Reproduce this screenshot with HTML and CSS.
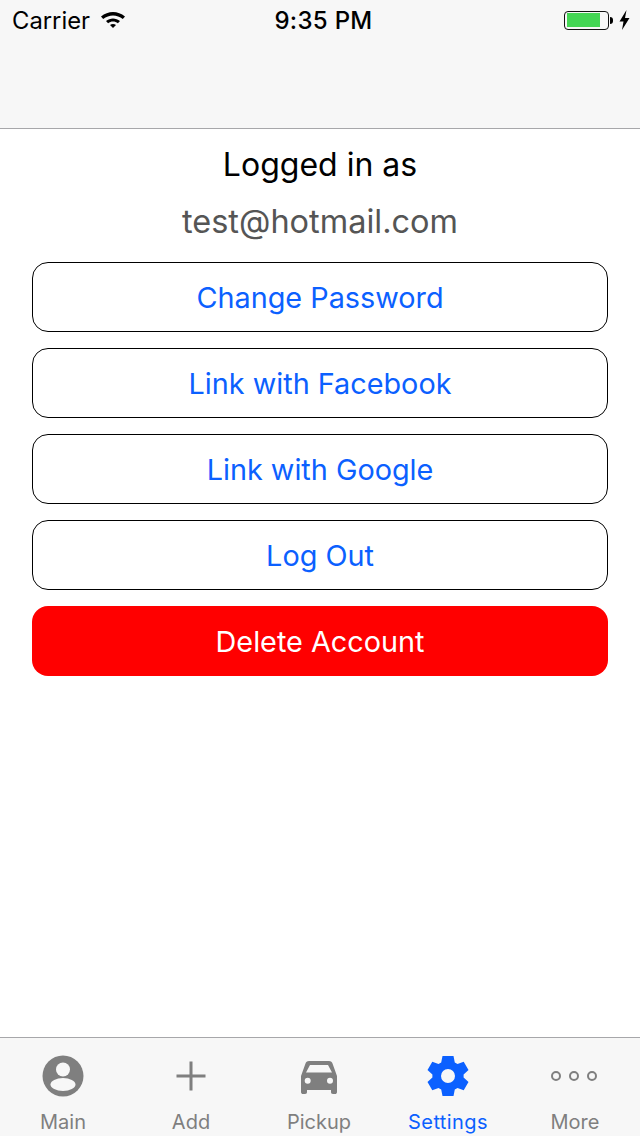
FILE: index.html
```html
<!DOCTYPE html>
<html lang="en">
<head>
    <meta charset="UTF-8">
    <meta name="viewport" content="width=device-width, initial-scale=1.0">
    <title>Settings</title>
    <link rel="stylesheet" href="styles.css">
</head>
<body>
    <div class="app-container">
        <header class="app-header">
            <div class="status-bar">
                <div class="status-left">
                    <span class="carrier">Carrier</span>
                    <svg class="wifi" width="26" height="18" viewBox="0 0 26 18">
                        <path d="M1 6.500C8 .5 18 .5 25 6.500L22.800 9C17 4.200 9 4.200 3.200 9Z"/>
                        <path d="M6 11C10.200 7.600 15.800 7.600 20 11L17.900 13.300C15 11 11 11 8.100 13.300Z"/>
                        <path d="M10 15C11.800 13.700 14.200 13.700 16 15L13 18Z"/>
                    </svg>
                </div>
                <span class="clock">9:35 PM</span>
                <div class="status-right">
                    <div class="battery"><div class="battery-level"></div></div>
                    <div class="battery-tip"></div>
                    <svg class="bolt" width="11" height="20" viewBox="0 0 11 20">
                        <path d="M7.500 0L0.500 11.500H4.500L3 20L10.500 8H6Z"/>
                    </svg>
                </div>
            </div>
        </header>

        <main class="content">
            <h1 class="logged-label">Logged in as</h1>
            <p class="logged-email">test@hotmail.com</p>
            <button class="action-btn">Change Password</button>
            <button class="action-btn">Link with Facebook</button>
            <button class="action-btn">Link with Google</button>
            <button class="action-btn">Log Out</button>
            <button class="action-btn danger">Delete Account</button>
        </main>

        <nav class="bottom-nav">
            <div class="nav-btn">
                <svg width="42" height="42" viewBox="0 0 42 42">
                    <circle cx="21" cy="21" r="20.500" fill="#7f7f7f"/>
                    <circle cx="21" cy="14.500" r="7" fill="#f7f7f7"/>
                    <ellipse cx="21" cy="29.500" rx="12.500" ry="6.500" fill="#f7f7f7"/>
                </svg>
                <span>Main</span>
            </div>
            <div class="nav-btn">
                <svg width="42" height="42" viewBox="0 0 42 42">
                    <path d="M19.500 6.500h3v13h13v3h-13v13h-3v-13h-13v-3h13z" fill="#7f7f7f"/>
                </svg>
                <span>Add</span>
            </div>
            <div class="nav-btn">
                <svg width="42" height="42" viewBox="0 0 42 42">
                    <path fill-rule="evenodd" fill="#7f7f7f" d="M11 6H31C33 6 34 7 34.500 8.500L39 21V37C39 38.500 38 39 37 39H35C33.500 39 33 38 33 37V35H9V37C9 38 8.500 39 7 39H5C4 39 3 38.500 3 37V21L7.500 8.500C8 7 9 6 11 6ZM12 10L8 17.500H34L30 10ZM9.700 22.700A3 3 0 1 0 9.700 28.700A3 3 0 1 0 9.700 22.700ZM32 22.700A3 3 0 1 0 32 28.700A3 3 0 1 0 32 22.700Z"/>
                </svg>
                <span>Pickup</span>
            </div>
            <div class="nav-btn active">
                <svg width="42" height="42" viewBox="0 0 42 42">
                    <path fill-rule="evenodd" fill="#0b60ff" d="M15.500 1H26.500L27.800 7.400L30.500 8.900L36.700 6.800L41.500 15L36.600 19.400V22.600L41.500 27L36.700 35.200L30.500 33.100L27.800 34.600L26.500 41H15.500L14.200 34.600L11.500 33.100L5.300 35.200L.5 27L5.400 22.600V19.400L.5 15L5.300 6.800L11.500 8.900L14.200 7.400ZM21 14A7 7 0 1 0 21 28A7 7 0 1 0 21 14Z"/>
                </svg>
                <span>Settings</span>
            </div>
            <div class="nav-btn">
                <svg class="more-icon" width="52" height="42" viewBox="0 0 52 42">
                    <circle cx="8" cy="21" r="4" fill="none" stroke="#7f7f7f" stroke-width="2"/>
                    <circle cx="26" cy="21" r="4" fill="none" stroke="#7f7f7f" stroke-width="2"/>
                    <circle cx="44" cy="21" r="4" fill="none" stroke="#7f7f7f" stroke-width="2"/>
                </svg>
                <span>More</span>
            </div>
        </nav>
    </div>
</body>
</html>
```

FILE: styles.css
```css
* {
    margin: 0;
    padding: 0;
    box-sizing: border-box;
}

body {
    font-family: 'Inter', 'Liberation Sans', sans-serif;
    background: white;
    color: black;
    overflow: hidden;
}

.app-container {
    width: 640px;
    height: 1136px;
    display: flex;
    flex-direction: column;
}

.app-header {
    height: 129px;
    background: #f7f7f7;
    border-bottom: 1px solid #a7a7aa;
}

.status-bar {
    height: 40px;
    display: grid;
    grid-template-columns: 1fr auto 1fr;
    align-items: center;
    padding: 0 10px 0 12px;
}

.status-left {
    display: flex;
    align-items: center;
    gap: 10px;
}

.carrier {
    font-size: 23.800px;
}

.clock {
    font-size: 24px;
    font-weight: 500;
    letter-spacing: 0.300px;
    margin-left: 5px;
}

.wifi {
    margin-top: -3px;
}

.status-right {
    display: flex;
    align-items: center;
    justify-content: flex-end;
}

.battery {
    width: 45px;
    height: 19px;
    padding: 1.500px;
    border: 1.500px solid #111;
    border-radius: 4px;
}

.battery-level {
    width: 33px;
    height: 100%;
    background: #44d654;
}

.battery-tip {
    width: 3px;
    height: 7px;
    margin-left: 1px;
    background: black;
    border-radius: 0 3px 3px 0;
}

.bolt {
    margin-left: 6px;
}

.content {
    flex: 1;
    display: flex;
    flex-direction: column;
    align-items: center;
    padding: 0 32px;
}

.logged-label {
    height: 64px;
    padding-top: 15px;
    font-size: 32px;
    line-height: 42px;
    font-weight: 400;
}

.logged-email {
    height: 54px;
    font-size: 32.500px;
    line-height: 58px;
    color: #555;
    margin-bottom: -1px;
}

.action-btn {
    width: 576px;
    height: 70px;
    flex: none;
    margin-top: 16px;
    background: white;
    border: 1.500px solid black;
    border-radius: 16px;
    color: #0b60ff;
    font-family: inherit;
    font-size: 28.800px;
}

.danger {
    background: #ff0000;
    border: none;
    color: white;
}

.bottom-nav {
    height: 99px;
    display: flex;
    background: #f7f7f7;
    border-top: 1px solid #a7a7aa;
}

.nav-btn {
    width: 128px;
    display: flex;
    flex-direction: column;
    align-items: center;
    padding: 17px 2px 0 0;
    color: #7f7f7f;
}

.nav-btn span {
    margin-top: 11px;
    font-size: 20px;
    line-height: 28px;
}

.nav-btn.active {
    padding-right: 0;
    color: #0b60ff;
}

.nav-btn.active span {
    letter-spacing: 0.400px;
}

.more-icon {
    margin-right: 2px;
}
```
